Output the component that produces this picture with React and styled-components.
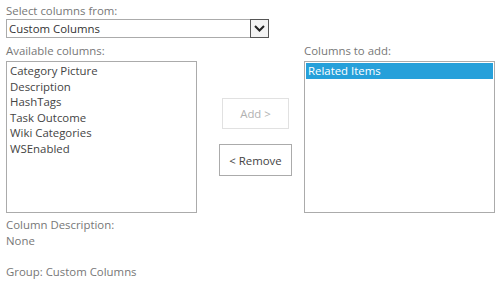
import React from "react";
import styled, { createGlobalStyle } from "styled-components";

const GlobalStyle = createGlobalStyle`
  body {
    margin: 0;
    background: #fff;
    font-family: "Open Sans", "Noto Sans", "Liberation Sans", sans-serif;
  }
`;

// Outer page wrapper
const Page = styled.div`
  width: 501px;
  height: 283px;
  padding: 3px 6px 0 6px;
  box-sizing: border-box;
  font-size: 11.4px;
  color: #444;
`;

const Label = styled.div`
  color: #777;
  line-height: 15px;
  height: 15px;
`;

const SelectBox = styled.div`
  width: 263px;
  height: 19px;
  box-sizing: border-box;
  border: 1px solid #ababab;
  display: flex;
  align-items: center;
  margin-top: 1px;
  background: #fff;
`;

const SelectValue = styled.div`
  flex: 1;
  padding-left: 2px;
  color: #333;
  line-height: 17px;
`;

const ArrowBox = styled.div`
  width: 19px;
  height: 19px;
  margin-right: -1px;
  box-sizing: border-box;
  border: 1px solid #555;
  background: #f3f3f3;
  display: flex;
  align-items: center;
  justify-content: center;
`;

const Columns = styled.div`
  display: grid;
  grid-template-columns: 191px 107px 191px;
  margin-top: 5px;
`;

const Side = styled.div`
  display: flex;
  flex-direction: column;
`;

const ListBox = styled.div`
  height: 152px;
  box-sizing: border-box;
  border: 1px solid #ababab;
  padding: 1px;
  margin-top: 3px;
`;

const Item = styled.div`
  height: 15.6px;
  line-height: 15.6px;
  padding-left: 2px;
  white-space: nowrap;
  color: ${(p) => (p.$selected ? "#fff" : "#444")};
  background: ${(p) => (p.$selected ? "#26a0da" : "transparent")};
`;

const Middle = styled.div`
  display: flex;
  flex-direction: column;
  align-items: center;
  padding-top: 55px;
  padding-left: 10px;
  gap: 15px;
`;

const Button = styled.div`
  box-sizing: border-box;
  width: ${(p) => p.$w}px;
  height: ${(p) => p.$h}px;
  display: flex;
  align-items: center;
  justify-content: center;
  border: 1px solid ${(p) => (p.$disabled ? "#e1e1e1" : "#ababab")};
  color: ${(p) => (p.$disabled ? "#b1b1b1" : "#444")};
  background: #fff;
`;

const Info = styled.div`
  margin-top: 4px;
  color: #777;
  line-height: 15.5px;
`;

const Spacer = styled.div`
  height: 15.5px;
`;

const available = [
  "Category Picture",
  "Description",
  "HashTags",
  "Task Outcome",
  "Wiki Categories",
  "WSEnabled",
];

export default function App() {
  return (
    <Page>
      <GlobalStyle />
      <Label>Select columns from:</Label>
      <SelectBox>
        <SelectValue>Custom Columns</SelectValue>
        <ArrowBox>
          <svg width="11" height="7" viewBox="0 0 11 7">
            <path d="M1 1 L5.5 5.5 L10 1" fill="none" stroke="#222" strokeWidth="2" />
          </svg>
        </ArrowBox>
      </SelectBox>
      <Columns>
        <Side>
          <Label>Available columns:</Label>
          <ListBox>
            {available.map((name) => (
              <Item key={name}>{name}</Item>
            ))}
          </ListBox>
        </Side>
        <Middle>
          <Button $w={67} $h={31} $disabled>Add &gt;</Button>
          <Button $w={73} $h={32}>&lt; Remove</Button>
        </Middle>
        <Side>
          <Label>Columns to add:</Label>
          <ListBox>
            <Item $selected>Related Items</Item>
          </ListBox>
        </Side>
      </Columns>
      <Info>
        <div>Column Description:</div>
        <div>None</div>
        <Spacer />
        <div>Group: Custom Columns</div>
      </Info>
    </Page>
  );
}
